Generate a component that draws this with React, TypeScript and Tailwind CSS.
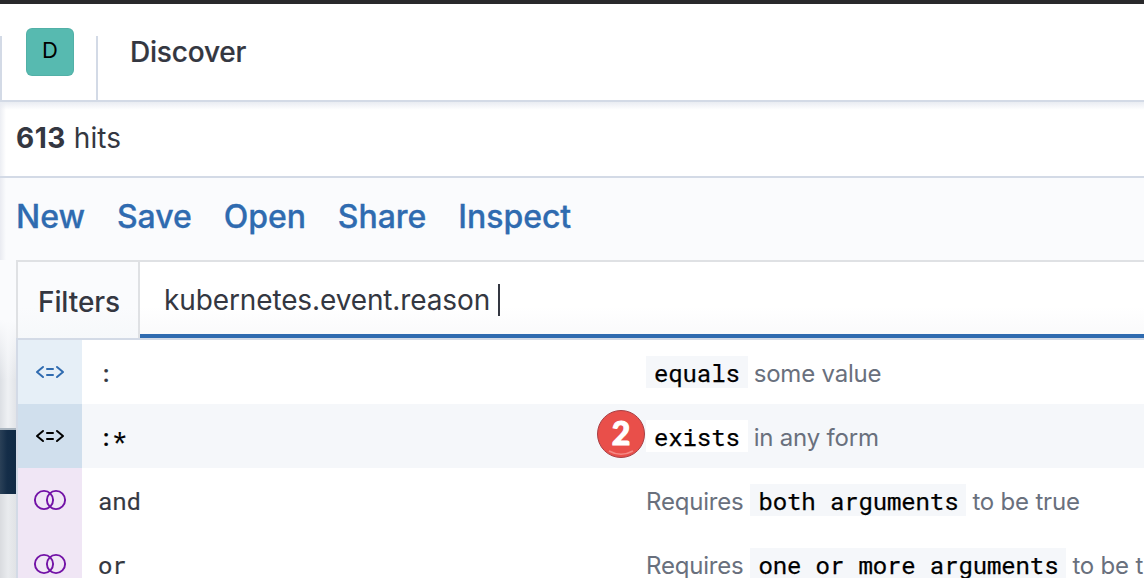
import React from "react";

const mono = "font-['Roboto_Mono','Liberation_Mono',monospace]";

function OperatorIcon() {
  return (
    <svg width="32" height="32" viewBox="0 0 32 32" fill="none" stroke="currentColor" strokeWidth="2" strokeLinecap="round" strokeLinejoin="round">
      <path d="M9 11 3 16l6 5M23 11l6 5-6 5M13 13h6M13 19h6" />
    </svg>
  );
}

function ConjunctionIcon() {
  return (
    <svg width="34" height="32" viewBox="0 0 34 32" fill="none" stroke="currentColor" strokeWidth="1.9">
      <circle cx="11" cy="16" r="9.1" />
      <circle cx="23" cy="16" r="9.1" />
    </svg>
  );
}

function Code({ children, active = false }: { children: string; active?: boolean }) {
  return (
    <span className={`${mono} inline-flex h-8 items-center px-2 text-[24px] tracking-[-0.12px] whitespace-pre text-black [-webkit-text-stroke:0.25px_currentColor] ${active ? "bg-white" : "bg-[#f5f7fa]"}`}>
      <span className="relative top-[1px]">{children}</span>
    </span>
  );
}

type RowProps = { kind: "operator" | "conjunction"; text: string; before?: string; code: string; after: string; active?: boolean };

function Row({ kind, text, before, code, after, active = false }: RowProps) {
  const tone = kind === "conjunction" ? "bg-[#f0e6f5] text-[#7212a6]" : active ? "bg-[#d0dfed] text-black" : "bg-[#e6eff7] text-[#2f6bb0]";
  return (
    <div className={`flex h-16 w-[1300px] shrink-0 ${active ? "bg-[#f5f7fa]" : "bg-white"}`}>
      <div className={`flex w-16 shrink-0 justify-center pt-4 ${tone}`}>
        {kind === "operator" ? <OperatorIcon /> : <ConjunctionIcon />}
      </div>
      <div className={`${mono} w-[564px] shrink-0 pt-[17px] pl-4 text-[24px] leading-8 tracking-[-0.12px] [-webkit-text-stroke:0.2px_currentColor] ${active ? "text-black" : "text-[#343741]"}`}>
        {active ? <>:<span className="relative top-[3px]">*</span></> : text}
      </div>
      <div className="flex h-16 items-center text-[24px] tracking-[-0.2px] whitespace-pre text-[#69707d]">
        {before && <span className="relative top-[2px] mr-[7px]">{before}</span>}
        <Code active={active}>{code}</Code>
        <span className="relative top-[2px] ml-[6px]">{after}</span>
      </div>
      {active && (
        <div className="absolute top-[70px] left-[579px] flex size-12 items-center justify-center rounded-full border border-[#a84045] bg-[#e94f4a]">
          <span className="relative -top-px font-['Lato',sans-serif] text-[32px] leading-none font-black text-white [-webkit-text-stroke:1px_white]">2</span>
          <svg className="absolute bottom-0 left-2" width="30" height="8" viewBox="0 0 30 8" fill="none">
            <path d="M3 2Q15 8.5 27 2" stroke="#f58a85" strokeWidth="1.6" />
          </svg>
        </div>
      )}
    </div>
  );
}

export default function App() {
  return (
    <div className="h-[578px] w-[1144px] overflow-hidden bg-[#fafbfd] font-['Inter',sans-serif] text-[#343741]">
      <div className="h-1 bg-[#29292b]" />
      <header className="flex h-[98px] items-end border-b-2 border-[#d3dae6] bg-white">
        <div className="flex h-16 w-[98px] items-end border-x-2 border-[#d3dae6] pb-6 pl-6">
          <div className="flex size-12 items-center justify-center rounded-md bg-[#57bab0] text-[22px] leading-none text-black shadow-[inset_0_0_0_1px_rgba(0,0,0,0.05)]">
            <span className="relative -top-0.5">D</span>
          </div>
        </div>
        <h1 className="h-16 pl-8 text-[28px] leading-8 font-medium tracking-[-0.2px] [-webkit-text-stroke:0.2px_currentColor]">Discover</h1>
      </header>
      <main className="h-[476px]">
        <div className="flex h-[76px] items-center border-b-2 border-[#d3dae6] bg-white bg-[linear-gradient(180deg,#e9ecf2_0,transparent_8px),linear-gradient(90deg,#eceef3_0,white_6px)] pb-0.5 pl-4 text-[28px]">
          <span className="font-bold tracking-[0.5px]">613</span><span className="ml-2 tracking-[0.05px]">hits</span>
        </div>
        <nav className="flex h-[82px] gap-8 bg-[linear-gradient(90deg,#e9ebf1_0,#fafbfd_6px)] pt-[19px] pl-4 text-[32px] leading-10 font-medium tracking-[-0.04px] text-[#2f6bb0] [-webkit-text-stroke:0.3px_currentColor]">
          <a>New</a><a>Save</a><a>Open</a><a>Share</a><a>Inspect</a>
        </nav>
        <div className="flex">
          <aside className="flex w-4 shrink-0 flex-col">
            <div className="h-[168px] bg-[linear-gradient(180deg,#fafbfd_60px,transparent_120px),linear-gradient(90deg,#dcdfe4,#eff1f4_50%,#e2e4e8)]" />
            <div className="h-[66px] border-t-2 border-[#a9b4bf] bg-[linear-gradient(90deg,#2a4057,#142d48_45%,#112a44)]" />
            <div className="h-[84px] bg-[linear-gradient(90deg,#d9dbdf,#e9ebee_50%,#e1e3e6)]" />
          </aside>
          <section className="w-[1128px] shrink-0 overflow-hidden">
            <div className="flex h-[78px] border-t-2 border-l-2 border-[#dfe1e4] bg-white">
              <div className="w-[122px] shrink-0 border-r-2 border-[#dfe1e4] bg-[linear-gradient(180deg,#fafbfd_45px,#f6f8fa)] pt-5 pl-5 text-[28px] leading-10 font-medium tracking-[-0.1px]">Filters</div>
              <div className="flex grow border-b-4 border-[#2f6bb0] bg-[linear-gradient(180deg,white_45px,#fafafb)] pt-[18px] pl-6 text-[28px] leading-10">
                <span className="tracking-[-0.12px]">kubernetes.event.reason</span>
                <span className="mt-1 ml-2 h-8 w-0.5 bg-[#343741]" />
              </div>
            </div>
            <div className="relative flex h-[240px] flex-col overflow-hidden border-t-2 border-l-2 border-[#d3dae6]">
              <Row kind="operator" text=":" code="equals" after="some value" />
              <Row kind="operator" text=":*" code="exists" after="in any form" active />
              <Row kind="conjunction" text="and" before="Requires" code="both arguments" after="to be true" />
              <Row kind="conjunction" text="or" before="Requires" code="one or more arguments" after="to be true" />
            </div>
          </section>
        </div>
      </main>
    </div>
  );
}
